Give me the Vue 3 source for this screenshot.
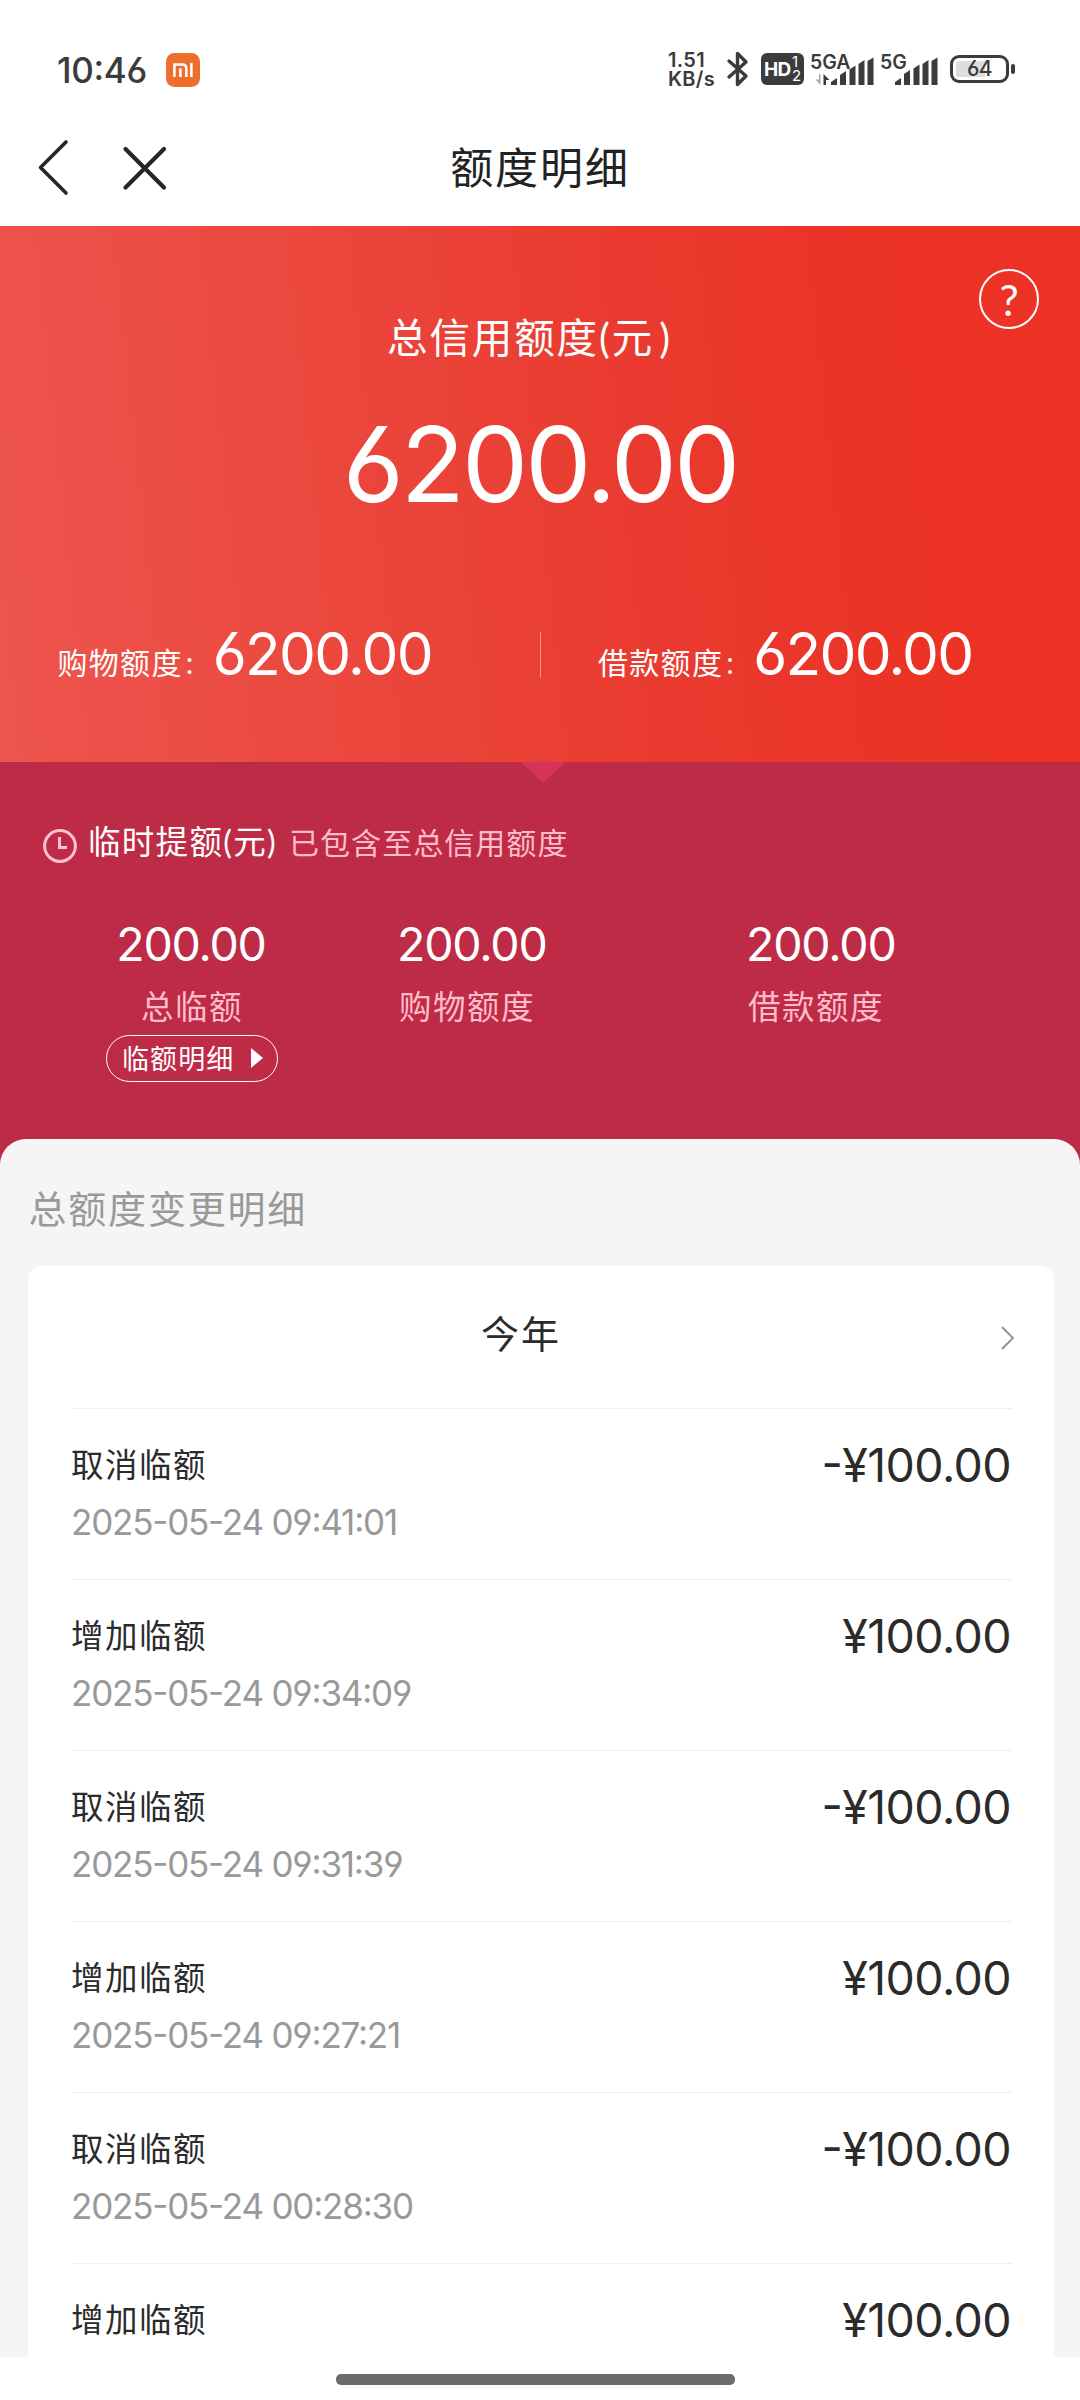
<script setup>
const records = [
  { title: '取消临额', time: '2025-05-24 09:41:01', amount: '-¥100.00' },
  { title: '增加临额', time: '2025-05-24 09:34:09', amount: '¥100.00' },
  { title: '取消临额', time: '2025-05-24 09:31:39', amount: '-¥100.00' },
  { title: '增加临额', time: '2025-05-24 09:27:21', amount: '¥100.00' },
  { title: '取消临额', time: '2025-05-24 00:28:30', amount: '-¥100.00' },
  { title: '增加临额', time: '', amount: '¥100.00' },
]
</script>

<template>
  <div class="screen">
    <header class="status">
      <span class="clock">10:46</span>
      <svg class="mi" width="34" height="34" viewBox="0 0 34 34">
        <rect width="34" height="34" rx="8.5" fill="#ee6f2d" />
        <path d="M8.400 24V11.400h7.800c2.600 0 4.100 1.300 4.100 3.900V24M14.400 24v-8.400" fill="none" stroke="#fff" stroke-width="2.500" />
        <path d="M25.400 10.100V24" stroke="#fff" stroke-width="2.500" />
      </svg>
      <div class="speed"><span>1.51</span><span>KB/s</span></div>
      <svg class="bt" width="24" height="38" viewBox="0 0 24 38">
        <path d="M3 11l17 15-8.500 8.500V3.500L20 12 3 27" fill="none" stroke="#3b3b3b" stroke-width="3.400" stroke-linejoin="round" stroke-linecap="round" />
      </svg>
      <div class="hd">
        <span class="hd-main">HD</span>
        <span class="hd-nums"><i>1</i><i>2</i></span>
      </div>
      <div class="signal sig-a">
        <span class="net">5GA</span>
        <svg width="64" height="36" viewBox="0 0 64 36">
          <path d="M6.500 22v11l-5-5.500h3.500V22z" fill="#aaa" />
          <path d="M9.500 33V22l6 6H12v5z" fill="#3b3b3b" />
          <path fill="#3b3b3b" d="M17 33v-3l6-4v7zM26 33V23l6-4v14zM35.500 33V17.500l6-4V33zM44.500 33V12l6-4v25zM53.500 33V9l6-3.500V33z" />
        </svg>
      </div>
      <div class="signal sig-b">
        <span class="net">5G</span>
        <svg width="58" height="36" viewBox="0 0 58 36">
          <path fill="#3b3b3b" d="M15 33v-3l6-4v7zM24 33V22l6-4v15zM33.500 33V16.500l6-4V33zM42.500 33V12l6-4v25zM51.500 33V9l6-3.500V33z" />
        </svg>
      </div>
      <div class="battery"><span>64</span></div>
    </header>

    <nav class="nav">
      <svg width="180" height="70" viewBox="0 0 180 70" fill="none" stroke="#262626" stroke-linecap="round">
        <path d="M66 9L40.500 34.500 66 60" stroke-width="3.600" stroke-linejoin="round" />
        <path d="M125.500 16l38.500 38.500M164 16l-38.500 38.500" stroke-width="4.200" />
      </svg>
      <h1>额度明细</h1>
      <span class="nav-end"></span>
    </nav>

    <section class="hero">
      <span class="help">?</span>
      <p class="hero-label">总信用额度(元<b>)</b></p>
      <p class="hero-total">6200.00</p>
      <div class="split">
        <div class="half"><span class="half-label">购物额度</span><span class="colon">:</span><span class="half-num">6200.00</span></div>
        <i class="bar"></i>
        <div class="half"><span class="half-label">借款额度</span><span class="colon">:</span><span class="half-num">6200.00</span></div>
      </div>
    </section>

    <section class="temp">
      <i class="notch"></i>
      <div class="temp-head">
        <svg width="34" height="34" viewBox="0 0 34 34" fill="none" stroke="#ffc0d0">
          <circle cx="17" cy="17" r="15.400" stroke-width="3" />
          <path d="M16.500 8v10.500H24" stroke-width="3" />
        </svg>
        <span class="temp-title">临时提额(元)</span>
        <span class="temp-note">已包含至总信用额度</span>
      </div>
      <div class="temp-cols">
        <div class="col c1">
          <span class="num">200.00</span>
          <span class="lab">总临额</span>
          <span class="pill">临额明细<i></i></span>
        </div>
        <div class="col c2"><span class="num">200.00</span><span class="lab">购物额度</span></div>
        <div class="col c3"><span class="num">200.00</span><span class="lab">借款额度</span></div>
      </div>
    </section>

    <main class="sheet">
      <h2>总额度变更明细</h2>
      <div class="card">
        <div class="year">
          <span>今年</span>
          <svg width="16" height="26" viewBox="0 0 16 26" fill="none" stroke="#8f8f8f" stroke-width="1.800"><path d="M2 2l11 11L2 24" /></svg>
        </div>
        <div v-for="(r, i) in records" :key="i" class="row">
          <div class="info">
            <span class="title">{{ r.title }}</span>
            <span class="time">{{ r.time }}</span>
          </div>
          <span class="amount">{{ r.amount }}</span>
        </div>
      </div>
    </main>

    <footer class="home"><i></i></footer>
  </div>
</template>

<style>
body { margin: 0; background: #fff; }
</style>

<style scoped>
* { box-sizing: border-box; margin: 0; padding: 0; }
i, b { font-style: normal; font-weight: 400; }
.screen {
  width: 1080px; height: 2400px; overflow: hidden; background: #fff;
  display: flex; flex-direction: column;
  font-family: Lato, "Noto Sans CJK SC", sans-serif; font-weight: 400; color: #2b2b2b;
  white-space: nowrap;
}
.status, .hero-total, .half-num, .num, .time, .amount {
  font-family: Inter, Lato, sans-serif;
  font-feature-settings: "cv03", "cv04", "case";
}
.status { height: 108px; flex: none; display: flex; align-items: flex-start; padding: 51px 0 0 57px; color: #3b3b3b; }
.clock { width: 109px; font-size: 35px; line-height: 38px; letter-spacing: -0.300px; font-weight: 500; }
.mi { margin-top: 2px; }
.speed { width: 58px; margin-left: 468px; display: flex; flex-direction: column; font-size: 20px; line-height: 19px; font-weight: 600; letter-spacing: 0.300px; }
.bt { margin-top: -1px; }
.hd { margin: 2px 0 0 11px; width: 43px; height: 32px; background: #3b3b3b; border-radius: 6px; color: #fff; display: flex; align-items: center; padding-left: 3px; font-weight: 700; }
.hd-main { width: 28px; font-size: 19px; letter-spacing: -0.800px; }
.hd-nums { display: flex; flex-direction: column; font-size: 15px; line-height: 14px; }
.signal { position: relative; height: 36px; }
.signal svg { display: block; }
.net { position: absolute; left: 0; top: 0; font-size: 19.500px; line-height: 20px; font-weight: 600; letter-spacing: 0; }
.sig-a { margin-left: 6px; width: 64px; margin-top: 1px; }
.sig-a svg { margin-left: 4px; }
.sig-b { margin-left: 6px; width: 58px; margin-top: 1px; }
.battery { position: relative; margin: 4px 0 0 12px; width: 59px; height: 28px; border: 3px solid #3b3b3b; border-radius: 9px; display: flex; align-items: center; justify-content: center; background: linear-gradient(90deg, #dedede 62%, #fff 62%) content-box; padding: 3px; }
.battery::after { content: ""; position: absolute; right: -9px; top: 6px; width: 4px; height: 10px; border-radius: 2px; background: #3b3b3b; }
.battery span { font-size: 21px; line-height: 22px; font-weight: 500; letter-spacing: -0.500px; }

.nav { height: 118px; flex: none; display: flex; align-items: center; justify-content: space-between; padding-top: 2px; }
.nav h1 { font-size: 43px; line-height: 60px; letter-spacing: 1.900px; font-weight: 400; color: #222; }
.nav-end { width: 180px; }

.hero { position: relative; height: 536px; flex: none; color: #fff; background: linear-gradient(84deg, #ed554e 0%, #eb463c 34%, #ea3a2f 60%, #eb3326 80%, #ec3224 100%); display: flex; flex-direction: column; }
.help { position: absolute; left: 979px; top: 43px; width: 60px; height: 60px; border: 2px solid #fff; border-radius: 50%; font-size: 43px; line-height: 57px; text-align: center; }
.hero-label { margin: 82px 0 0 387px; font-size: 40.500px; line-height: 60px; letter-spacing: 1.900px; }
.hero-label b { margin-left: 5px; }
.hero-total { margin: 36px 0 0 0; text-align: center; font-size: 105px; line-height: 120px; letter-spacing: -2.900px; }
.split { display: flex; align-items: center; margin-top: 102px; height: 60px; }
.half { flex: 1; display: flex; align-items: baseline; padding: 2px 0 0 57.500px; line-height: 60px; }
.half-label { font-size: 30px; letter-spacing: 1.300px; }
.colon { width: 30px; padding-left: 3px; font-size: 30px; }
.half-num { font-size: 58.500px; letter-spacing: -1.700px; position: relative; top: 1px; }
.bar { width: 1px; height: 46px; margin-top: -2px; background: rgba(255, 255, 255, 0.45); }

.temp { position: relative; height: 405px; flex: none; background: #be2b46; color: #fff; padding-top: 55px; }
.notch { position: absolute; left: 521px; top: 0; border: solid transparent; border-width: 21px 22px 0; border-top-color: #d53558; }
.temp-head { display: flex; align-items: center; height: 50px; padding-left: 43px; }
.temp-head svg { margin-top: 7px; }
.temp-title { margin-left: 11px; width: 201px; font-size: 32.500px; line-height: 50px; letter-spacing: 1.300px; }
.temp-note { font-size: 30px; letter-spacing: 1.050px; color: #ffbccb; line-height: 50px; }
.temp-cols { display: flex; margin-top: 50px; }
.col { display: flex; flex-direction: column; align-items: flex-start; }
.c1 { margin-left: 106px; width: 172px; align-items: center; }
.c2 { margin-left: 121px; width: 349px; }
.c3 { width: 200px; }
.num { font-size: 46.500px; line-height: 54px; letter-spacing: -1.200px; margin-left: -2px; }
.lab { margin-top: 13px; font-size: 32.500px; line-height: 46px; letter-spacing: 1.500px; color: #ffbccb; }
.pill { margin-top: 5px; width: 172px; height: 47px; border: 1.500px solid #fff; border-radius: 24px; display: flex; align-items: center; padding: 0 0 2px 15px; font-size: 27px; letter-spacing: 1.100px; }
.pill i { margin: 1px 0 0 17px; border: solid transparent; border-width: 10.500px 0 10.500px 12px; border-left-color: #fff; }

.sheet { position: relative; flex: none; height: 1218px; margin-top: -28px; background: #f5f5f5; border-radius: 26px 26px 0 0; padding: 44px 26px 0 28px; overflow: hidden; }
.sheet h2 { font-size: 38px; line-height: 50px; letter-spacing: 1.800px; font-weight: 400; color: #999; margin-left: 0.500px; }
.card { margin-top: 33px; height: 1120px; background: #fff; border-radius: 14px 14px 0 0; padding: 0 42px 0 44px; }
.year { height: 142px; display: flex; align-items: center; padding-left: 409px; justify-content: space-between; }
.year span { font-size: 38px; letter-spacing: 2px; line-height: 50px; margin-top: -8px; }
.year svg { margin-right: -4px; margin-top: 2px; }
.row { height: 171px; border-top: 1px solid #efefef; display: flex; justify-content: space-between; align-items: flex-start; }
.info { display: flex; flex-direction: column; padding-top: 32px; margin-left: -1px; }
.title { font-size: 32.500px; line-height: 48px; letter-spacing: 1.500px; }
.time { margin-top: 9px; font-size: 35px; line-height: 48px; color: #999; letter-spacing: -1.200px; }
.amount { padding-top: 27px; margin-right: 1px; font-size: 46.500px; line-height: 58px; letter-spacing: -0.600px; }
.home { flex: 1; background: #fff; padding: 17px 0 0 336px; }
.home i { display: block; width: 399px; height: 11px; border-radius: 5px; background: #6b6b6b; }
</style>
